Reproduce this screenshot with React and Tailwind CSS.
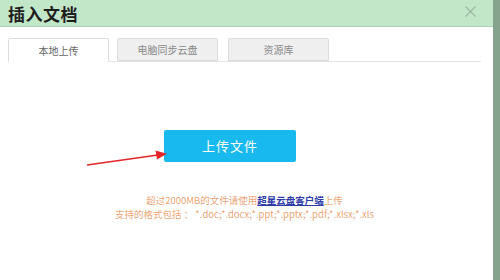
export default function App() {
  const tabs = ["本地上传", "电脑同步云盘", "资源库"];
  return (
    <div
      className="relative w-[500px] h-[280px] flex overflow-hidden bg-white"
      style={{ fontFamily: '"Noto Sans CJK SC", "Noto Sans", sans-serif' }}
    >
      <div className="flex-1 flex flex-col">
        <header className="h-[27px] bg-[#c2e6c8] border-b border-[#abcfb1] flex items-center justify-between pl-2 pr-[17px]">
          <h1 className="text-[17px] font-bold text-[#1e1e1e] leading-none tracking-[0.5px]">插入文档</h1>
          <svg width="11" height="11" viewBox="0 0 11 11" className="mb-[3px]">
            <path d="M0.5 0.5 L10.5 10.5 M10.5 0.5 L0.5 10.5" stroke="#9db8a2" strokeWidth="1.2" />
          </svg>
        </header>

        <div className="pl-2 pr-3 pt-3">
          <div className="flex gap-2 border-b border-[#e3e3e3] h-[23px] items-end">
            {tabs.map((t, i) => (
              <div
                key={t}
                className={
                  i === 0
                    ? "w-[101px] h-[24px] -mb-px bg-white border border-[#dcdcdc] border-b-white rounded-t-[2px] flex items-center justify-center text-[10px] text-[#666]"
                    : "w-[101px] h-[23px] bg-[#efefef] border border-[#dcdcdc] rounded-t-[2px] flex items-center justify-center text-[10px] text-[#888] " +
                      (i === 2 ? "ml-[2px]" : "")
                }
              >
                {t}
              </div>
            ))}
          </div>

          <div className="pt-[68px]">
            <button className="ml-[156px] w-[132px] h-[32px] bg-[#17b9ee] rounded-[2px] text-white text-[13px] tracking-[1px]">
              上传文件
            </button>
          </div>

          <div className="mt-[31px] flex flex-col items-center text-[9.5px] leading-[14px] text-[#eba677]">
            <p>
              超过2000MB的文件请使用
              <a className="text-[#2d3aa5] font-bold underline">超星云盘客户端</a>
              上传
            </p>
            <p>支持的格式包括 ： *.doc;*.docx;*.ppt;*.pptx;*.pdf;*.xlsx;*.xls</p>
          </div>
        </div>
      </div>
      <div className="w-[7px] bg-[#86a48d]" />

      <svg className="absolute left-0 top-0" width="500" height="280" viewBox="0 0 500 280">
        <line x1="87" y1="165" x2="158" y2="155" stroke="#e3262a" strokeWidth="1.6" />
        <path d="M167 153.8 L155.5 150.5 L157 159.5 Z" fill="#e3262a" />
      </svg>
    </div>
  );
}
